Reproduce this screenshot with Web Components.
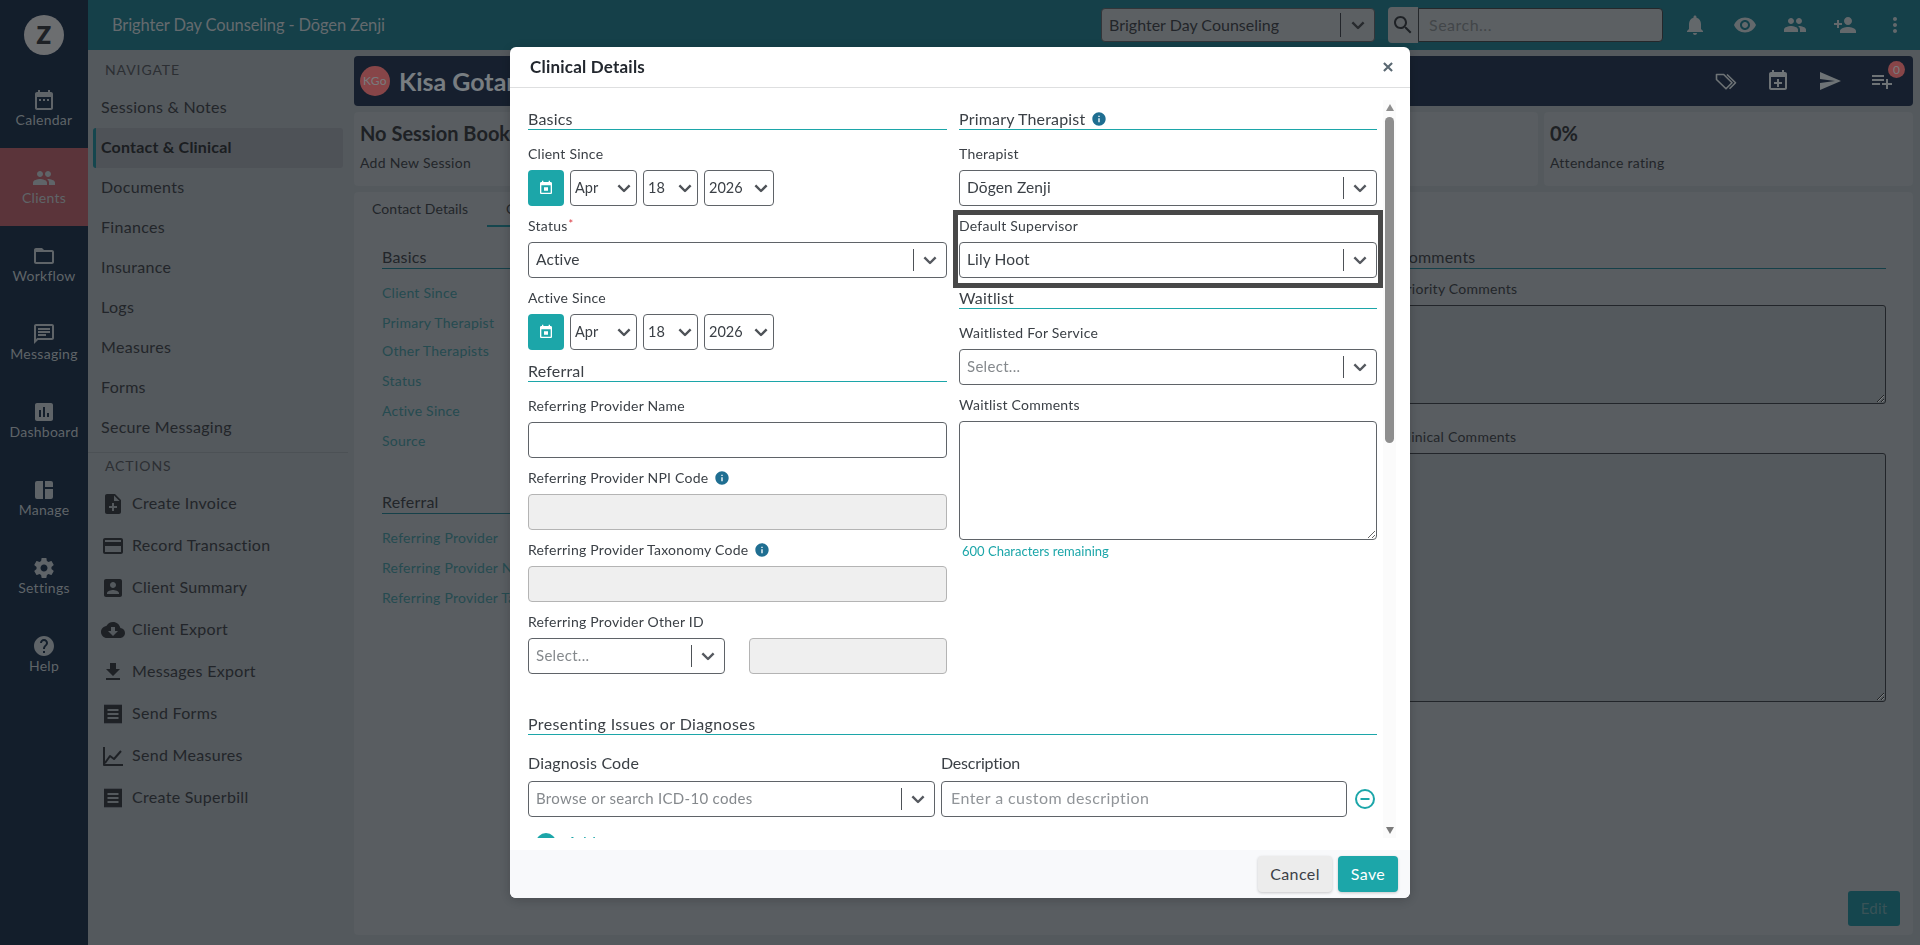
<!DOCTYPE html>
<html lang="en">
<head>
<meta charset="utf-8">
<title>Clinical Details</title>
<style>
  html,body{margin:0;height:945px;overflow:hidden;background:#8c949b;}
  body{font-family:"Lato","Liberation Sans",sans-serif;font-size:16px;color:#3a3f46;letter-spacing:.2px;}
</style>
</head>
<body>
<z-app>
  <z-rail slot="rail">
    <z-rail-item icon="calendar" label="Calendar"></z-rail-item>
    <z-rail-item icon="people" label="Clients" active></z-rail-item>
    <z-rail-item icon="folder" label="Workflow"></z-rail-item>
    <z-rail-item icon="message" label="Messaging"></z-rail-item>
    <z-rail-item icon="chart" label="Dashboard"></z-rail-item>
    <z-rail-item icon="manage" label="Manage"></z-rail-item>
    <z-rail-item icon="settings" label="Settings"></z-rail-item>
    <z-rail-item icon="help" label="Help"></z-rail-item>
  </z-rail>
  <z-topbar slot="top"></z-topbar>
  <z-side slot="side">
    <z-menu-head>NAVIGATE</z-menu-head>
    <z-menu-item>Sessions &amp; Notes</z-menu-item>
    <z-menu-item active>Contact &amp; Clinical</z-menu-item>
    <z-menu-item>Documents</z-menu-item>
    <z-menu-item>Finances</z-menu-item>
    <z-menu-item>Insurance</z-menu-item>
    <z-menu-item>Logs</z-menu-item>
    <z-menu-item>Measures</z-menu-item>
    <z-menu-item>Forms</z-menu-item>
    <z-menu-item>Secure Messaging</z-menu-item>
    <z-menu-head divided>ACTIONS</z-menu-head>
    <z-action-item icon="noteadd">Create Invoice</z-action-item>
    <z-action-item icon="card">Record Transaction</z-action-item>
    <z-action-item icon="accountbox">Client Summary</z-action-item>
    <z-action-item icon="cloud">Client Export</z-action-item>
    <z-action-item icon="download">Messages Export</z-action-item>
    <z-action-item icon="receipt">Send Forms</z-action-item>
    <z-action-item icon="linechart">Send Measures</z-action-item>
    <z-action-item icon="receipt">Create Superbill</z-action-item>
  </z-side>
  <z-main slot="main">
    <z-client-bar></z-client-bar>
    <z-stats>
      <z-stat title="No Session Booked" sub="Add New Session"></z-stat>
      <z-stat></z-stat>
      <z-stat></z-stat>
      <z-stat title="0%" sub="Attendance rating"></z-stat>
    </z-stats>
    <z-panel></z-panel>
  </z-main>
</z-app>

<z-backdrop>
  <z-modal heading="Clinical Details">
    <z-two-col>
      <div slot="left">
        <z-heading>Basics</z-heading>
        <z-field label="Client Since"><z-date-row></z-date-row></z-field>
        <z-field label="Status" required><z-select value="Active"></z-select></z-field>
        <z-field label="Active Since"><z-date-row></z-date-row></z-field>
        <z-heading>Referral</z-heading>
        <z-field label="Referring Provider Name"><z-input></z-input></z-field>
        <z-field label="Referring Provider NPI Code" info><z-input disabled></z-input></z-field>
        <z-field label="Referring Provider Taxonomy Code" info><z-input disabled></z-input></z-field>
        <z-field label="Referring Provider Other ID"><z-other-id></z-other-id></z-field>
      </div>
      <div slot="right">
        <z-heading info>Primary Therapist</z-heading>
        <z-field label="Therapist"><z-select value="Dōgen Zenji"></z-select></z-field>
        <z-field label="Default Supervisor" highlight><z-select value="Lily Hoot"></z-select></z-field>
        <z-heading>Waitlist</z-heading>
        <z-field label="Waitlisted For Service"><z-select placeholder="Select..."></z-select></z-field>
        <z-field label="Waitlist Comments"><z-textbox height="119" counter="600 Characters remaining"></z-textbox></z-field>
      </div>
    </z-two-col>
    <z-diagnoses></z-diagnoses>
  </z-modal>
</z-backdrop>

<script>
const zig = (n,s)=>Array(n).fill(s).join('');
const ICONS = {
  calendar:"M9 11H7v2h2v-2zm4 0h-2v2h2v-2zm4 0h-2v2h2v-2zm2-7h-1V2h-2v2H8V2H6v2H5c-1.11 0-1.99.9-1.99 2L3 20c0 1.1.89 2 2 2h14c1.1 0 2-.9 2-2V6c0-1.1-.9-2-2-2zm0 16H5V9h14v11z",
  people:"M16 11c1.66 0 2.99-1.34 2.99-3S17.66 5 16 5c-1.66 0-3 1.34-3 3s1.34 3 3 3zm-8 0c1.66 0 2.99-1.34 2.99-3S9.66 5 8 5C6.34 5 5 6.34 5 8s1.34 3 3 3zm0 2c-2.33 0-7 1.17-7 3.5V19h14v-2.5c0-2.33-4.67-3.5-7-3.5zm8 0c-.29 0-.62.02-.97.05 1.16.84 1.97 1.97 1.97 3.45V19h6v-2.5c0-2.33-4.67-3.5-7-3.5z",
  folder:"M20 6h-8l-2-2H4c-1.1 0-1.99.9-1.99 2L2 18c0 1.1.9 2 2 2h16c1.1 0 2-.9 2-2V8c0-1.1-.9-2-2-2zm0 12H4V8h16v10z",
  message:"M20 2H4c-1.1 0-2 .9-2 2v18l4-4h14c1.1 0 2-.9 2-2V4c0-1.1-.9-2-2-2zm0 14H5.2L4 17.2V4h16v12zM6 12h8v2H6zM6 9h12v2H6zM6 6h12v2H6z",
  chart:"M19 3H5c-1.1 0-2 .9-2 2v14c0 1.1.9 2 2 2h14c1.1 0 2-.9 2-2V5c0-1.1-.9-2-2-2zM9 17H7v-7h2v7zm4 0h-2V7h2v10zm4 0h-2v-4h2v4z",
  manage:"M5 3h6v18H5a2 2 0 0 1-2-2V5a2 2 0 0 1 2-2zM13 3h6a2 2 0 0 1 2 2v4h-8zM13 11h8v8a2 2 0 0 1-2 2h-6z",
  settings:"M19.43 12.98c.04-.32.07-.64.07-.98s-.03-.66-.07-.98l2.11-1.65c.19-.15.24-.42.12-.64l-2-3.46c-.12-.22-.39-.3-.61-.22l-2.49 1c-.52-.4-1.08-.73-1.69-.98l-.38-2.65C14.46 2.18 14.25 2 14 2h-4c-.25 0-.46.18-.49.42l-.38 2.65c-.61.25-1.17.59-1.69.98l-2.49-1c-.23-.09-.49 0-.61.22l-2 3.46c-.13.22-.07.49.12.64l2.11 1.65c-.04.32-.07.65-.07.98s.03.66.07.98l-2.11 1.65c-.19.15-.24.42-.12.64l2 3.46c.12.22.39.3.61.22l2.49-1c.52.4 1.08.73 1.69.98l.38 2.65c.03.24.24.42.49.42h4c.25 0 .46-.18.49-.42l.38-2.65c.61-.25 1.17-.59 1.69-.98l2.49 1c.23.09.49 0 .61-.22l2-3.46c.12-.22.07-.49-.12-.64l-2.11-1.65zM12 15.5c-1.93 0-3.5-1.57-3.5-3.5s1.57-3.5 3.5-3.5 3.5 1.57 3.5 3.5-1.57 3.5-3.5 3.5z",
  help:"M12 2C6.48 2 2 6.48 2 12s4.48 10 10 10 10-4.48 10-10S17.52 2 12 2zm1 17h-2v-2h2v2zm2.07-7.75l-.9.92C13.45 12.9 13 13.5 13 15h-2v-.5c0-1.1.45-2.1 1.17-2.83l1.24-1.26c.37-.36.59-.86.59-1.41 0-1.1-.9-2-2-2s-2 .9-2 2H8c0-2.21 1.79-4 4-4s4 1.79 4 4c0 .88-.36 1.68-.93 2.25z",
  noteadd:"M14 2H6c-1.1 0-1.99.9-1.99 2L4 20c0 1.1.89 2 1.99 2H18c1.1 0 2-.9 2-2V8l-6-6zm2 14h-3v3h-2v-3H8v-2h3v-3h2v3h3v2zm-3-7V3.5L18.5 9H13z",
  card:"M20 4H4c-1.11 0-1.99.89-1.99 2L2 18c0 1.11.89 2 2 2h16c1.11 0 2-.89 2-2V6c0-1.11-.89-2-2-2zm0 14H4v-6h16v6zm0-10H4V6h16v2z",
  accountbox:"M3 5v14c0 1.1.89 2 2 2h14c1.1 0 2-.9 2-2V5c0-1.1-.9-2-2-2H5c-1.11 0-2 .9-2 2zm12 4c0 1.66-1.34 3-3 3s-3-1.34-3-3 1.34-3 3-3 3 1.34 3 3zm-9 8c0-2 4-3.1 6-3.1s6 1.1 6 3.1v1H6v-1z",
  cloud:"M19.35 10.04C18.67 6.59 15.64 4 12 4 9.11 4 6.6 5.64 5.35 8.04 2.34 8.36 0 10.91 0 14c0 3.31 2.69 6 6 6h13c2.76 0 5-2.24 5-5 0-2.64-2.05-4.78-4.65-4.96zM17 13l-5 5-5-5h3V9h4v4h3z",
  download:"M19 9h-4V3H9v6H5l7 7 7-7zM5 18v2h14v-2H5z",
  receipt:"M3 3.2"+zig(9,"l1-1 1 1")+"V20.8"+zig(9,"l-1 1-1-1")+"zM6.5 7v2h11V7zM6.5 11v2h11v-2zM6.5 15v2h11v-2z",
  bell:"M12 22c1.1 0 2-.9 2-2h-4c0 1.1.89 2 2 2zm6-6v-5c0-3.07-1.64-5.64-4.5-6.32V4c0-.83-.67-1.5-1.5-1.5s-1.5.67-1.5 1.5v.68C7.63 5.36 6 7.92 6 11v5l-2 2v1h16v-1l-2-2z",
  eye:"M12 4.5C7 4.5 2.73 7.61 1 12c1.73 4.39 6 7.5 11 7.5s9.27-3.11 11-7.5c-1.73-4.39-6-7.5-11-7.5zM12 17c-2.76 0-5-2.24-5-5s2.24-5 5-5 5 2.24 5 5-2.24 5-5 5zm0-8c-1.66 0-3 1.34-3 3s1.34 3 3 3 3-1.34 3-3-1.34-3-3-3z",
  personadd:"M15 12c2.21 0 4-1.79 4-4s-1.79-4-4-4-4 1.79-4 4 1.79 4 4 4zm-9-2V7H4v3H1v2h3v3h2v-3h3v-2H6zm9 4c-2.67 0-8 1.34-8 4v2h16v-2c0-2.66-5.33-4-8-4z",
  more:"M12 8c1.1 0 2-.9 2-2s-.9-2-2-2-2 .9-2 2 .9 2 2 2zm0 2c-1.1 0-2 .9-2 2s.9 2 2 2 2-.9 2-2-.9-2-2-2zm0 6c-1.1 0-2 .9-2 2s.9 2 2 2 2-.9 2-2-.9-2-2-2z",
  search:"M15.5 14h-.79l-.28-.27C15.41 12.59 16 11.11 16 9.5 16 5.91 13.09 3 9.5 3S3 5.91 3 9.5 5.91 16 9.5 16c1.61 0 3.09-.59 4.23-1.57l.27.28v.79l5 4.99L20.49 19l-4.99-5zm-6 0C7.01 14 5 11.99 5 9.5S7.01 5 9.5 5 14 7.01 14 9.5 11.99 14 9.5 14z",
  send:"M2.01 21L23 12 2.01 3 2 10l15 2-15 2z",
  playlist:"M14 10H2v2h12v-2zm0-4H2v2h12V6zm4 8v-4h-2v4h-4v2h4v4h2v-4h4v-2h-4zM2 16h8v-2H2v2z",
  eventadd:"M19 3h-1V1h-2v2H8V1H6v2H5c-1.11 0-1.99.9-1.99 2L3 19c0 1.1.89 2 2 2h14c1.1 0 2-.9 2-2V5c0-1.1-.9-2-2-2zm0 16H5V8h14v11zM11 10h2v3h3v2h-3v3h-2v-3H8v-2h3z",
  today:"M19 3h-1V1h-2v2H8V1H6v2H5c-1.11 0-1.99.9-1.99 2L3 19c0 1.1.89 2 2 2h14c1.1 0 2-.9 2-2V5c0-1.1-.9-2-2-2zm0 16H5V8h14v11zM9 11h6v5H9z",
  info:"M12 2C6.48 2 2 6.48 2 12s4.48 10 10 10 10-4.48 10-10S17.52 2 12 2zm1 15h-2v-6h2v6zm0-8h-2V7h2v2z"
};
const STROKES = {
  tags:{d:"M2.5 5.5h7.2l8.3 8.3-6 6-9.5-9.3zM6 8.4h.1M13 5.5l8.5 8.3-6 6",w:1.6},
  linechart:{d:"M3 3v18h19M4 19l5-7 4 3 7-8",w:2},
  chevron:{d:"M4.5 8.5l7.5 7.5 7.5-7.5",w:3.2},
  close:{d:"M5 5l14 14M19 5L5 19",w:3.6}
};
class Z extends HTMLElement{
  connectedCallback(){
    if(this.shadowRoot) return;
    this.attachShadow({mode:'open'}).innerHTML='<style>'+this.css()+'</style>'+this.html();
  }
  css(){return ':host{display:block}'}
  html(){return '<slot></slot>'}
  a(n,d=''){return this.hasAttribute(n)?this.getAttribute(n):d}
}
const D=(n,c)=>customElements.define(n,c);

D('z-icon',class extends Z{
  css(){return `:host{display:inline-flex;flex:none;line-height:0} svg{display:block}`}
  html(){
    const n=this.a('name'),s=this.a('size','24');
    const k=STROKES[n];
    const body=k?`<path d="${k.d}" fill="none" stroke="currentColor" stroke-width="${k.w}" stroke-linejoin="round"/>`
                :`<path d="${ICONS[n]}" fill="currentColor" fill-rule="evenodd"/>`;
    return `<svg width="${s}" height="${s}" viewBox="0 0 24 24" aria-hidden="true">${body}</svg>`;
  }
});

D('z-app',class extends Z{
  css(){return `:host{display:grid;grid-template-columns:88px 266px 1fr;grid-template-rows:50px 1fr;height:945px;background:#8c949b}
    ::slotted([slot=rail]){grid-row:1/3;grid-column:1}
    ::slotted([slot=top]){grid-row:1;grid-column:2/4}
    ::slotted([slot=side]){grid-row:2;grid-column:2}
    ::slotted([slot=main]){grid-row:2;grid-column:3;min-width:0}`}
  html(){return `<slot name="rail"></slot><slot name="top"></slot><slot name="side"></slot><slot name="main"></slot>`}
});

D('z-rail',class extends Z{
  css(){return `:host{display:flex;flex-direction:column;background:#203249;padding-top:15px}
    .logo{width:40px;height:40px;border-radius:50%;background:#b4b7bb;color:#33383f;font:800 24px/40px "Lato",sans-serif;text-align:center;margin:0 auto 15px;}`}
  html(){return `<div class="logo">Z</div><slot></slot>`}
});
D('z-rail-item',class extends Z{
  css(){return `:host{display:flex;flex-direction:column;align-items:center;height:78px;box-sizing:border-box;padding-top:18px;color:#9ea7ad;font-size:14px;line-height:16px;letter-spacing:.27px}
    :host([active]){background:#985861}`}
  html(){return `<z-icon name="${this.a('icon')}"></z-icon><span>${this.a('label')}</span>`}
});
D('z-topbar',class extends Z{
  css(){return `:host{display:flex;align-items:center;background:#236b7a;padding-left:24px}
    .title{flex:1;font-size:16.5px;color:#a7b1b7;letter-spacing:-.13px}
    .sel{width:274px;height:34px;margin-right:13px;box-sizing:border-box;background:#9aa1a6;border:1px solid #55595f;border-radius:4px;display:flex;align-items:center;padding-left:7px;color:#3a3f46;letter-spacing:0}
    .sel span{flex:1;padding-bottom:2px}
    .sep{width:1px;height:24px;background:#3a3f46}
    .chev{width:33px;display:flex;justify-content:center;color:#42464c}
    .sb{width:30px;height:36px;background:#9aa1a6;border-radius:4px 0 0 4px;display:flex;align-items:center;justify-content:center;color:#33383f}
    .si{width:245px;height:34px;box-sizing:border-box;background:#9aa1a6;border:1px solid #3f4349;border-radius:0 4px 4px 0;padding-left:10px;line-height:31px;color:#6f757a;letter-spacing:.5px}
    .icons{display:flex;margin-left:7px;color:#a5aeb3}
    .icons z-icon{width:50px;justify-content:center}`}
  html(){return `<div class="title">Brighter Day Counseling - Dōgen Zenji</div>
    <div class="sel"><span>Brighter Day Counseling</span><i class="sep"></i><div class="chev"><z-icon name="chevron" size="18"></z-icon></div></div>
    <div class="sb"><z-icon name="search" size="24"></z-icon></div><div class="si">Search...</div>
    <div class="icons"><z-icon name="bell"></z-icon><z-icon name="eye"></z-icon><z-icon name="people"></z-icon><z-icon name="personadd"></z-icon><z-icon name="more"></z-icon></div>`}
});
D('z-side',class extends Z{css(){return `:host{display:block;background:#8c949b}`}});
D('z-menu-head',class extends Z{
  css(){return `:host{display:block;height:38px;box-sizing:border-box;padding:12px 0 0 17px;font-size:14px;line-height:16px;letter-spacing:.9px;color:#4a4f56}
    :host([divided]){height:31px;margin:4px 6px 0 0;border-top:1px solid #7f878e;padding-top:5px}`}
});
D('z-menu-item',class extends Z{
  css(){return `:host{display:flex;align-items:center;height:40px;width:250px;box-sizing:border-box;margin-left:5px;padding:0 0 3px 8px;font-size:16px;letter-spacing:.3px;border-radius:3px}
    :host([active]){background:#828991;border-left:3px solid #237582;padding-left:5px;font-weight:700;letter-spacing:.2px;color:#2e3238}`}
});
D('z-action-item',class extends Z{
  css(){return `:host{display:flex;align-items:center;gap:7px;height:42px;padding-left:13px;font-size:16px;letter-spacing:.3px}
    span{padding-bottom:4px}`}
  html(){return `<z-icon name="${this.a('icon')}" style="color:#33383f"></z-icon><span><slot></slot></span>`}
});
D('z-main',class extends Z{
  css(){return `:host{display:flex;flex-direction:column;gap:6px;padding:6px 7px 10px 0;box-sizing:border-box;height:895px}`}
});
D('z-client-bar',class extends Z{
  css(){return `:host{display:flex;align-items:center;height:50px;flex:none;background:#25354d;border-radius:4px;padding-left:6px;box-sizing:border-box}
    .av{width:30px;height:30px;border-radius:50%;background:#e27478;color:#c9ccd0;font-size:12px;line-height:30px;text-align:center;letter-spacing:.3px}
    .nm{flex:1;margin-left:9px;font-size:25px;font-weight:700;color:#c8d0d8;letter-spacing:0}
    .ic{display:flex;color:#b8c0c5;margin-right:5px}
    .ic span{width:52px;display:flex;justify-content:center;position:relative}
    b{position:absolute;left:32px;top:-8px;width:17px;height:17px;border-radius:50%;background:#e27478;color:#c9ccd0;font:400 12px/17px "Lato",sans-serif;text-align:center}`}
  html(){return `<div class="av">KGo</div><div class="nm">Kisa Gotan</div><div class="ic">
    <span><z-icon name="tags"></z-icon></span><span><z-icon name="eventadd"></z-icon></span><span><z-icon name="send"></z-icon></span><span><z-icon name="playlist"></z-icon><b>0</b></span></div>`}
});
D('z-stats',class extends Z{
  css(){return `:host{display:grid;grid-template-columns:1fr 1fr 1fr 369px;gap:6px;height:74px;flex:none}`}
});
D('z-stat',class extends Z{
  css(){return `:host{display:block;background:#949ba2;border-radius:4px;padding:9px 6px 0;box-sizing:border-box}
    .t{font-size:20px;line-height:24px;font-weight:700;color:#33373d;white-space:nowrap;letter-spacing:0}
    .s{font-size:14px;line-height:18px;margin-top:9px;letter-spacing:.28px}`}
  html(){return this.hasAttribute('title')?`<div class="t">${this.a('title')}</div><div class="s">${this.a('sub')}</div>`:''}
});
D('z-panel',class extends Z{
  css(){return `:host{display:flex;flex-direction:column;flex:1;background:#949ba2;border-radius:4px;padding:0 13px 9px 0;box-sizing:border-box;min-height:0}
    .tabs{display:flex;height:35px;font-size:14px;line-height:33px;letter-spacing:.09px}
    .t1{width:133px;box-sizing:border-box;padding-left:18px}
    .on{padding:0 19px;border-bottom:2px solid #237582;box-sizing:border-box;height:35px}
    .cols{display:grid;grid-template-columns:488px 488px 488px;gap:20px;padding:20px 0 0 28px;flex:1}
    .h{height:21px;border-bottom:1px solid #236b7a;font-size:16px;line-height:20px;letter-spacing:.2px}
    .r{height:30px;line-height:30px;font-size:14px;color:#3f7d86;letter-spacing:.25px}
    .lb{font-size:14px;line-height:20px;letter-spacing:.25px}
    textarea{display:block;width:100%;box-sizing:border-box;margin:6px 0 0;padding:0;background:#8c949b;border:1px solid #3a3f46;border-radius:3px}
    .edit{align-self:flex-end;width:52px;height:35px;background:#237582;border-radius:3px;color:#5f8a92;font-size:15px;line-height:35px;text-align:center}`}
  html(){return `<div class="tabs"><div class="t1">Contact Details</div><div class="on">Clinical Details</div></div>
    <div class="cols">
      <div>
        <div class="h">Basics</div>
        <div class="r" style="margin-top:9px">Client Since</div>
        <div class="r">Primary Therapist</div>
        <div class="r" style="margin-top:-2px">Other Therapists</div>
        <div class="r">Status</div>
        <div class="r">Active Since</div>
        <div class="r">Source</div>
        <div class="h" style="margin-top:36px">Referral</div>
        <div class="r" style="margin-top:9px">Referring Provider</div>
        <div class="r">Referring Provider NPI Code</div>
        <div class="r">Referring Provider Taxonomy Code</div>
      </div>
      <div></div>
      <div>
        <div class="h">Comments</div>
        <div class="lb" style="margin-top:10px">Priority Comments</div>
        <textarea style="height:99px"></textarea>
        <div class="lb" style="margin-top:23px">Clinical Comments</div>
        <textarea style="height:249px"></textarea>
      </div>
    </div>
    <div class="edit">Edit</div>`}
});

D('z-backdrop',class extends Z{
  css(){return `:host{position:fixed;inset:0;background:rgba(0,0,0,.4);display:flex;justify-content:center;align-items:flex-start}`}
});
D('z-modal',class extends Z{
  css(){return `:host{display:flex;flex-direction:column;width:900px;height:851px;margin-top:47px;background:#fff;border-radius:6px;position:relative;color:#3b4046;box-shadow:0 2px 12px rgba(0,0,0,.2)}
    header{display:flex;align-items:center;justify-content:space-between;height:41px;box-sizing:border-box;border-bottom:1px solid #dedfe0;padding:0 15px 1px 20px;flex:none}
    h2{margin:0;font-size:17px;font-weight:700;color:#22272e;letter-spacing:.21px}
    .x{color:#5a6872;display:flex}
    .body{height:750px;overflow:hidden;padding:20px 33px 0 18px;box-sizing:border-box;flex:none}
    .track{position:absolute;right:14px;top:53px;bottom:60px;width:13px;background:#fbfbfb;display:flex;flex-direction:column;align-items:center}
    .up{width:0;height:0;border:4.5px solid transparent;border-top:0;border-bottom:7px solid #8e8e8e;margin-top:4px}
    .dn{width:0;height:0;border:4.5px solid transparent;border-bottom:0;border-top:7px solid #7b7b7b;margin-top:auto;margin-bottom:4px}
    .th{width:9px;height:326px;background:#8e8e8e;border-radius:5px;margin-top:6px}
    footer{margin-top:12px;height:48px;background:#f8f9fb;border-radius:0 0 6px 6px;display:flex;justify-content:flex-end;align-items:center;gap:6px;padding-right:12px;flex:none}
    button{font:16px "Lato",sans-serif;letter-spacing:.4px;height:36px;border:0;border-radius:4px;padding:0 0 2px;box-shadow:0 1px 3px rgba(0,0,0,.2)}
    .c{width:74px;background:#ececec;color:#3b4046}
    .s{width:60px;background:#1ca6a9;color:#fff}`}
  html(){return `<header><h2>${this.a('heading')}</h2><span class="x"><z-icon name="close" size="14"></z-icon></span></header>
    <div class="body"><slot></slot></div>
    <div class="track"><i class="up"></i><i class="th"></i><i class="dn"></i></div>
    <footer><button class="c">Cancel</button><button class="s">Save</button></footer>`}
});
D('z-two-col',class extends Z{
  css(){return `:host{display:grid;grid-template-columns:419px 418px;gap:12px}`}
  html(){return `<slot name="left"></slot><slot name="right"></slot>`}
});
D('z-heading',class extends Z{
  css(){return `:host{display:flex;align-items:center;gap:6px;height:22px;box-sizing:border-box;border-bottom:1px solid #1ca6a9;font-size:16px;line-height:21px;margin-bottom:14px;letter-spacing:.18px;color:#3b4046}
    z-icon{color:#1f6e91}`}
  html(){return `<slot></slot>${this.hasAttribute('info')?'<z-icon name="info" size="16"></z-icon>':''}`}
});
D('z-field',class extends Z{
  css(){return `:host{display:block;padding-bottom:10px;position:relative}
    .l{display:flex;align-items:center;gap:6px;height:20px;box-sizing:border-box;padding-bottom:1px;margin-bottom:6px;font-size:14px;letter-spacing:.24px;color:#3b4046;white-space:nowrap}
    sup{color:#d9363e;font-size:11px;line-height:0;margin-left:1px;vertical-align:baseline;position:relative;top:-3px}
    z-icon{color:#1f6e91}
    :host([highlight]){margin-bottom:-1px}
    :host([highlight])::after{content:"";position:absolute;inset:-6px -6px 0 -6px;border:5px solid #484848;pointer-events:none}`}
  html(){return `<div class="l"><span>${this.a('label')}${this.hasAttribute('required')?'<sup>*</sup>':''}</span>${this.hasAttribute('info')?'<z-icon name="info" size="16"></z-icon>':''}</div><slot></slot>`}
});
D('z-select',class extends Z{
  css(){return `:host{display:flex;align-items:center;height:36px;box-sizing:border-box;border:1px solid #5f6368;border-radius:4px;background:#fff;padding-left:7px;font-size:15.5px;letter-spacing:.12px;color:#3b4046;min-width:0}
    span{flex:1;white-space:nowrap;overflow:hidden;padding-bottom:2px}
    .ph{color:#85898d;font-size:15px;letter-spacing:.3px}
    i{width:1px;height:22px;background:#4e5257;flex:none}
    .c{width:32px;display:flex;justify-content:center;color:#55595f;flex:none}`}
  html(){
    const v=this.a('value'),p=this.a('placeholder');
    return `<span class="${v?'':'ph'}">${v||p}</span><i></i><div class="c"><z-icon name="chevron" size="18"></z-icon></div>`}
});
D('z-mini-select',class extends Z{
  css(){return `:host{display:flex;align-items:center;justify-content:space-between;height:36px;box-sizing:border-box;border:1px solid #5f6368;border-radius:4px;padding:0 3px 0 4px;font-size:14.5px;letter-spacing:0;color:#3b4046;flex:none}
    span{padding-bottom:2px}
    z-icon{color:#4e5257}`}
  html(){return `<span>${this.a('value')}</span><z-icon name="chevron" size="18"></z-icon>`}
});
D('z-date-row',class extends Z{
  css(){return `:host{display:flex;gap:6px}
    .b{width:36px;height:36px;border-radius:4px;background:#1ca6a9;color:#fff;display:flex;align-items:center;justify-content:center;flex:none}`}
  html(){return `<div class="b"><z-icon name="today" size="16"></z-icon></div>
    <z-mini-select value="Apr" style="width:67px"></z-mini-select><z-mini-select value="18" style="width:55px"></z-mini-select><z-mini-select value="2026" style="width:70px"></z-mini-select>`}
});
D('z-input',class extends Z{
  css(){return `:host{display:block;height:36px;box-sizing:border-box;border:1px solid #5f6368;border-radius:4px;background:#fff;padding-left:9px;font-size:16px;line-height:32px;letter-spacing:.43px;color:#919599;white-space:nowrap;overflow:hidden}
    :host([disabled]){background:#efefef;border-color:#b4b4b4}`}
});
D('z-other-id',class extends Z{
  css(){return `:host{display:grid;grid-template-columns:197px 198px;gap:24px}`}
  html(){return `<z-select placeholder="Select..."></z-select><z-input disabled></z-input>`}
});
D('z-textbox',class extends Z{
  css(){return `:host{display:block} textarea{display:block;width:100%;box-sizing:border-box;margin:0;padding:0;border:1px solid #5f6368;border-radius:4px;background:#fff}
    p{margin:3px 0 0 3px;font-size:13px;line-height:16px;color:#1ca6a9;letter-spacing:0}`}
  html(){return `<textarea style="height:${this.a('height')}px"></textarea><p>${this.a('counter')}</p>`}
});
D('z-diagnoses',class extends Z{
  css(){return `:host{display:block;margin-top:29px}
    .g{display:grid;grid-template-columns:407px 406px 1fr;column-gap:6px;align-items:center}
    .l{font-size:16px;line-height:20px;margin:18px 0 8px;letter-spacing:.15px}
    .m{color:#1ca6a9;display:flex;justify-content:flex-end;padding-right:2px}
    .add{display:flex;align-items:center;gap:11px;margin:16px 0 0 8px;color:#1ca6a9;font-size:16px;line-height:20px}
    .add span{margin-top:-3px}
    .pl{width:20px;height:20px;border-radius:50%;background:#1ca6a9;flex:none}`}
  html(){return `<z-heading style="margin:0;letter-spacing:.38px">Presenting Issues or Diagnoses</z-heading>
    <div class="g"><div class="l">Diagnosis Code</div><div class="l" style="letter-spacing:-.2px">Description</div><div></div>
    <z-select placeholder="Browse or search ICD-10 codes"></z-select><z-input>Enter a custom description</z-input>
    <div class="m"><svg width="20" height="20" viewBox="0 0 20 20" aria-hidden="true"><circle cx="10" cy="10" r="9" fill="none" stroke="currentColor" stroke-width="2"/><path d="M5.5 10h9" stroke="currentColor" stroke-width="2"/></svg></div></div>
    <div class="add"><div class="pl"></div><span>Add</span></div>`}
});
</script>
</body>
</html>
